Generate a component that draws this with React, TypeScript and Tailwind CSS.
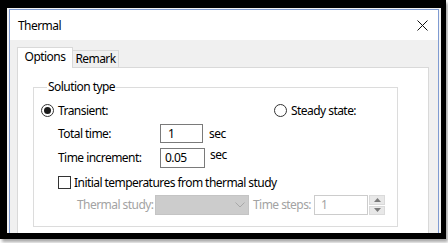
import React from "react";

const font = { fontFamily: '"Noto Sans", "Open Sans", Arial, sans-serif' };

function Radio({ checked }: { checked?: boolean }) {
  return (
    <span className="flex items-center justify-center w-[13px] h-[13px] rounded-full border border-[#333] bg-white shrink-0">
      {checked && <span className="w-[7px] h-[7px] rounded-full bg-[#1a1a1a]" />}
    </span>
  );
}

export default function App() {
  return (
    <div className="w-[448px] h-[243px] bg-white text-[12px] text-black leading-none tracking-[-0.55px] whitespace-nowrap" style={font}>
      {/* black highlight frame */}
      <div className="w-[446px] h-[239px] border-black border-l-[7px] border-t-[8px] border-r-[5px] border-b-[6px] bg-[#f3f3f3] pl-[2px] pr-[2px] pt-[1px] overflow-hidden shadow-[2px_3px_3px_rgba(0,0,0,0.35)]">
        <div className="h-[260px] border border-[#7f9bd2] bg-[#f0f0f0] flex flex-col">
          {/* Title bar */}
          <div className="h-[30px] bg-white flex items-center justify-between pl-[8px] pr-[10px] shrink-0">
            <span className="text-[12px] mt-[1px]">Thermal</span>
            <svg width="11" height="11" viewBox="0 0 11 11" className="mt-[1px]">
              <path d="M0.5 0.5 L10.5 10.5 M10.5 0.5 L0.5 10.5" stroke="#111" strokeWidth="1" />
            </svg>
          </div>

          {/* Tabs */}
          <div className="pl-[7px] pr-[9px] pt-[7px] flex flex-col">
            <div className="flex items-end">
              <div className="relative z-10 w-[56px] h-[21px] -mb-[1px] bg-white border-l border-t border-r border-[#d9d9d9] flex items-center justify-center pb-[2px]">
                Options
              </div>
              <div className="w-[46px] h-[17px] border-t border-r border-[#d9d9d9] bg-[#f0f0f0] flex items-center justify-center">
                Remark
              </div>
            </div>

            {/* Tab panel */}
            <div className="bg-white border border-[#d9d9d9] h-[170px] pl-[15px] pr-[30px] pt-[11px]">
              <fieldset className="border border-[#dcdcdc] h-[148px] pl-[7px] pr-[8px]">
                <legend className="ml-[6px] px-[1px] leading-[16px]">Solution type</legend>

                <div className="flex flex-col mt-[9px]">
                  <div className="flex items-center h-[13px]">
                    <div className="flex items-center gap-[4px] w-[233px]">
                      <Radio checked />
                      <span>Transient:</span>
                    </div>
                    <div className="flex items-center gap-[4px]">
                      <Radio />
                      <span>Steady state:</span>
                    </div>
                  </div>

                  <div className="flex items-center mt-[7px] pl-[17px]">
                    <span className="w-[102px]">Total time:</span>
                    <div className="w-[43px] h-[19px] border border-[#7a7a7a] flex items-center pl-[7px]">1</div>
                    <span className="ml-[6px]">sec</span>
                  </div>

                  <div className="flex items-center mt-[5px] pl-[17px]">
                    <span className="w-[102px]">Time increment:</span>
                    <div className="w-[45px] h-[20px] border border-[#7a7a7a] flex items-center pl-[4px]">0.05</div>
                    <span className="ml-[5px] -mt-[6px]">sec</span>
                  </div>

                  <div className="flex items-center mt-[8px] pl-[17px] gap-[3px]">
                    <span className="w-[13px] h-[13px] border border-[#333] bg-white shrink-0" />
                    <span>Initial temperatures from thermal study</span>
                  </div>

                  <div className="flex items-center mt-[6px] pl-[36px] text-[#a3a3a3]">
                    <span className="w-[78px]">Thermal study:</span>
                    <div className="w-[94px] h-[20px] border border-[#c4c4c4] bg-[#cccccc] flex items-center justify-end pr-[3px]">
                      <svg width="10" height="6" viewBox="0 0 10 6">
                        <path d="M0.5 0.5 L5 5 L9.5 0.5" fill="none" stroke="#a8a8a8" strokeWidth="1" />
                      </svg>
                    </div>
                    <span className="ml-[4px] w-[61px]">Time steps:</span>
                    <div className="w-[54px] h-[20px] border border-[#cccccc] bg-white flex items-center pl-[6px]">1</div>
                    <div className="ml-[1px] w-[16px] h-[20px] flex flex-col gap-[1px]">
                      <div className="flex-1 bg-[#e8e8e8] border border-[#dadada] flex items-center justify-center">
                        <svg width="7" height="4" viewBox="0 0 7 4"><path d="M0 4 L3.5 0 L7 4 Z" fill="#7a7a7a" /></svg>
                      </div>
                      <div className="flex-1 bg-[#e8e8e8] border border-[#dadada] flex items-center justify-center">
                        <svg width="7" height="4" viewBox="0 0 7 4"><path d="M0 0 L3.5 4 L7 0 Z" fill="#7a7a7a" /></svg>
                      </div>
                    </div>
                  </div>
                </div>
              </fieldset>
            </div>
          </div>
        </div>
      </div>
    </div>
  );
}
